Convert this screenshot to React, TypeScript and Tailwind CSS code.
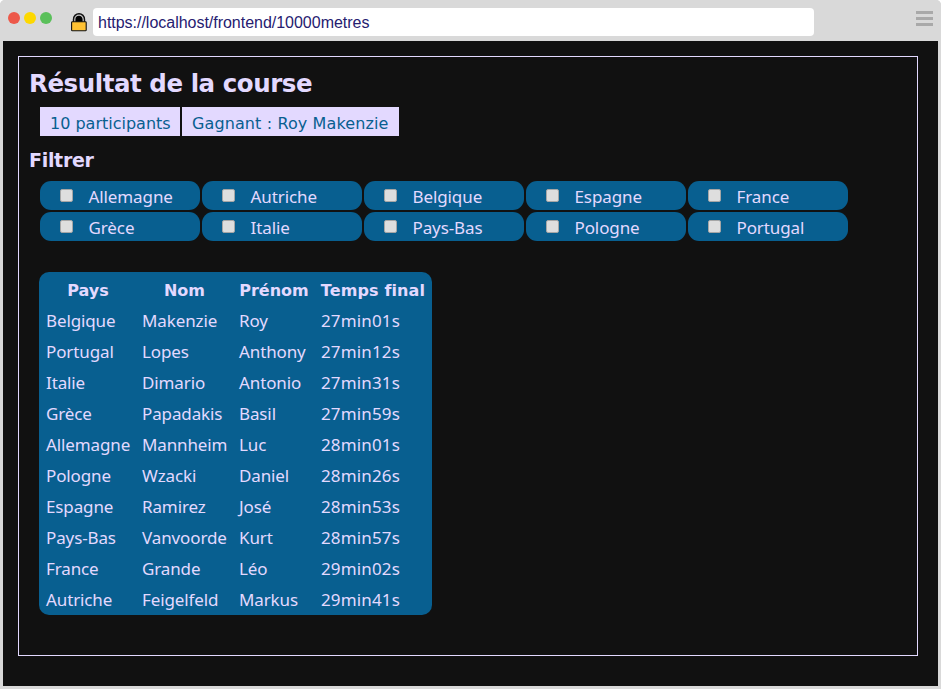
const countries = [
  "Allemagne", "Autriche", "Belgique", "Espagne", "France",
  "Grèce", "Italie", "Pays-Bas", "Pologne", "Portugal",
];

const results = [
  ["Belgique", "Makenzie", "Roy", "27min01s"],
  ["Portugal", "Lopes", "Anthony", "27min12s"],
  ["Italie", "Dimario", "Antonio", "27min31s"],
  ["Grèce", "Papadakis", "Basil", "27min59s"],
  ["Allemagne", "Mannheim", "Luc", "28min01s"],
  ["Pologne", "Wzacki", "Daniel", "28min26s"],
  ["Espagne", "Ramirez", "José", "28min53s"],
  ["Pays-Bas", "Vanvoorde", "Kurt", "28min57s"],
  ["France", "Grande", "Léo", "29min02s"],
  ["Autriche", "Feigelfeld", "Markus", "29min41s"],
];

function LockIcon() {
  return (
    <svg className="ml-[18px] mt-[12px] h-5 w-[18px] shrink-0" viewBox="0 0 18 20">
      <path d="M2.8 10V7.4a6.2 6.4 0 0 1 12.4 0V10z" fill="#111" />
      <path d="M4.8 10V7.4a4.2 4.2 0 0 1 8.4 0V10" fill="#000" stroke="#c8c8c8" strokeWidth="1.2" />
      <rect x="1.6" y="9.8" width="14.6" height="9" rx="0.8" fill="#ffc233" stroke="#111" strokeWidth="1.1" />
    </svg>
  );
}

function BrowserBar() {
  return (
    <header className="flex h-[41px] items-start bg-[#d9d9d9] pl-2">
      <div className="mt-3 flex gap-1">
        <span className="size-3 rounded-full bg-[#ed594a]" />
        <span className="size-3 rounded-full bg-[#fdd800]" />
        <span className="size-3 rounded-full bg-[#5ac05a]" />
      </div>
      <LockIcon />
      <div className="ml-[5px] mt-2 h-7 w-[721px] rounded-[4px] bg-white pl-[5px] font-['Liberation_Sans',sans-serif] text-[16px] leading-[30px] tracking-[-0.02px] text-[#262070]">
        https://localhost/frontend/10000metres
      </div>
      <div className="ml-auto mr-2 mt-[11px] flex w-[17px] flex-col gap-[3px]">
        <span className="h-[3px] bg-[#a9a9a9]" />
        <span className="h-[3px] bg-[#a9a9a9]" />
        <span className="h-[3px] bg-[#a9a9a9]" />
      </div>
    </header>
  );
}

export default function App() {
  return (
    <div className="h-[689px] w-[941px] overflow-hidden rounded-t-[5px] bg-[#d9d9d9] font-['DejaVu_Sans',sans-serif] text-[16px] text-[#e3d9ff]">
      <BrowserBar />
      <div className="ml-[3px] h-[645px] w-[935px] bg-[#111] pl-[15px] pt-[15px]">
        <main className="h-[600px] w-[900px] border border-[#e3d9ff] pl-[10px] pt-[10px]">
          <h1 className="h-10 text-[24.5px] font-bold leading-[34px] tracking-[-0.45px]">Résultat de la course</h1>
          <div className="ml-[11px] flex gap-0.5 whitespace-nowrap leading-[33px] text-[#085f90]">
            <p className="h-[29px] w-[140px] bg-[#e3d9ff] pl-[10px]">10 participants</p>
            <p className="h-[29px] w-[217px] bg-[#e3d9ff] pl-[10px] tracking-[0.11px]">Gagnant : Roy Makenzie</p>
          </div>
          <h2 className="mt-[10px] h-[35px] text-[19px] font-bold leading-7 tracking-[-0.3px]">Filtrer</h2>
          <div className="ml-[11px] grid w-[808px] grid-cols-5 gap-0.5">
            {countries.map((country) => (
              <label key={country} className="flex h-[29px] items-start rounded-[11px] bg-[#085f90] pl-5">
                <input type="checkbox" className="mt-2 size-[13px] appearance-none rounded-[2px] border border-[#a6a6a6] bg-[#dedede]" />
                <span className="ml-[15.5px] font-['Noto_Sans',sans-serif] text-[17px] leading-[31px] tracking-[-0.1px]">{country}</span>
              </label>
            ))}
          </div>
          <table className="ml-[10px] mt-[31px] w-[393px] table-fixed border-separate border-spacing-0.5 rounded-[10px] bg-[#085f90]">
            <thead>
              <tr className="h-[29px] whitespace-nowrap text-[16px] leading-[25px]">
                <th className="w-[94px] p-0 pt-1">Pays</th>
                <th className="w-[95px] p-0 pt-1">Nom</th>
                <th className="w-[80px] p-0 pt-1">Prénom</th>
                <th className="w-[114px] p-0 pt-1 tracking-[0.12px]">Temps final</th>
              </tr>
            </thead>
            <tbody className="font-['Noto_Sans',sans-serif] text-[17px] leading-[27px] tracking-[-0.12px]">
              {results.map((row) => (
                <tr key={row[0]} className="h-[29px]">
                  {row.map((cell) => (
                    <td key={cell} className="whitespace-nowrap p-0 pl-[5px] pt-0.5 last:tracking-[0.15px]">{cell}</td>
                  ))}
                </tr>
              ))}
            </tbody>
          </table>
        </main>
      </div>
    </div>
  );
}
